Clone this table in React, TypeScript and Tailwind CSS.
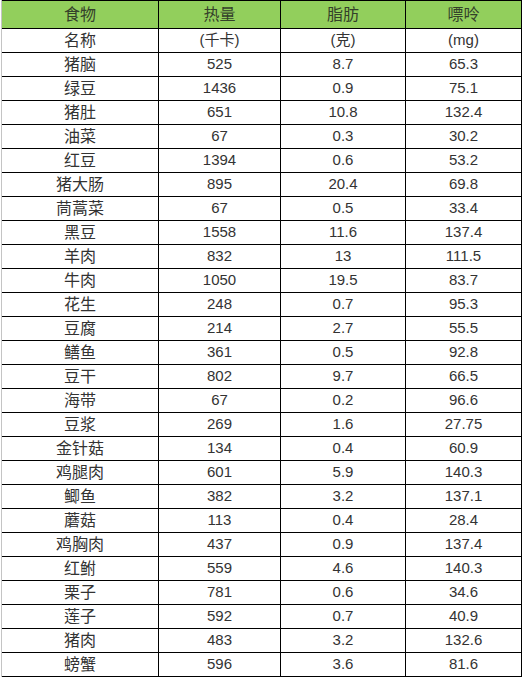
const ROWS: [string, string, string, string][] = [
  ["名称", "(千卡)", "(克)", "(mg)"],
  ["猪脑", "525", "8.7", "65.3"],
  ["绿豆", "1436", "0.9", "75.1"],
  ["猪肚", "651", "10.8", "132.4"],
  ["油菜", "67", "0.3", "30.2"],
  ["红豆", "1394", "0.6", "53.2"],
  ["猪大肠", "895", "20.4", "69.8"],
  ["茼蒿菜", "67", "0.5", "33.4"],
  ["黑豆", "1558", "11.6", "137.4"],
  ["羊肉", "832", "13", "111.5"],
  ["牛肉", "1050", "19.5", "83.7"],
  ["花生", "248", "0.7", "95.3"],
  ["豆腐", "214", "2.7", "55.5"],
  ["鳝鱼", "361", "0.5", "92.8"],
  ["豆干", "802", "9.7", "66.5"],
  ["海带", "67", "0.2", "96.6"],
  ["豆浆", "269", "1.6", "27.75"],
  ["金针菇", "134", "0.4", "60.9"],
  ["鸡腿肉", "601", "5.9", "140.3"],
  ["鲫鱼", "382", "3.2", "137.1"],
  ["蘑菇", "113", "0.4", "28.4"],
  ["鸡胸肉", "437", "0.9", "137.4"],
  ["红鲋", "559", "4.6", "140.3"],
  ["栗子", "781", "0.6", "34.6"],
  ["莲子", "592", "0.7", "40.9"],
  ["猪肉", "483", "3.2", "132.6"],
  ["螃蟹", "596", "3.6", "81.6"],
];

const font = "font-['Liberation_Sans','Noto_Sans_CJK_SC',sans-serif]";

function Cell({ w, children, last }: { w: string; children: React.ReactNode; last?: boolean }) {
  return (
    <div className={`${w} flex items-center justify-center border-r ${last ? "border-black" : "border-black"}`}>
      {children}
    </div>
  );
}

export default function App() {
  return (
    <div className={`w-[525px] h-[680px] bg-white ${font} text-[#333] overflow-hidden`}>
      <div className="ml-[1px] border-l border-[#c4c4c4] w-[521px]">
        {/* header */}
        <div className="flex h-[29px] bg-[#92cf5c] border-t border-[#b5e08f] border-b border-black text-[16px] text-[#34402a]">
          <Cell w="w-[157px]">食物</Cell>
          <Cell w="w-[122px]">热量</Cell>
          <Cell w="w-[125px]">脂肪</Cell>
          <Cell w="w-[116px]" last>嘌呤</Cell>
        </div>
        {ROWS.map((r) => (
          <div key={r[0]} className="flex h-[24px] border-b border-black">
            <Cell w="w-[157px]">
              <span className="text-[16px]">{r[0]}</span>
            </Cell>
            <Cell w="w-[122px]">
              <span className="text-[15px]">{r[1]}</span>
            </Cell>
            <Cell w="w-[125px]">
              <span className="text-[15px]">{r[2]}</span>
            </Cell>
            <Cell w="w-[116px]" last>
              <span className="text-[15px]">{r[3]}</span>
            </Cell>
          </div>
        ))}
      </div>
    </div>
  );
}
